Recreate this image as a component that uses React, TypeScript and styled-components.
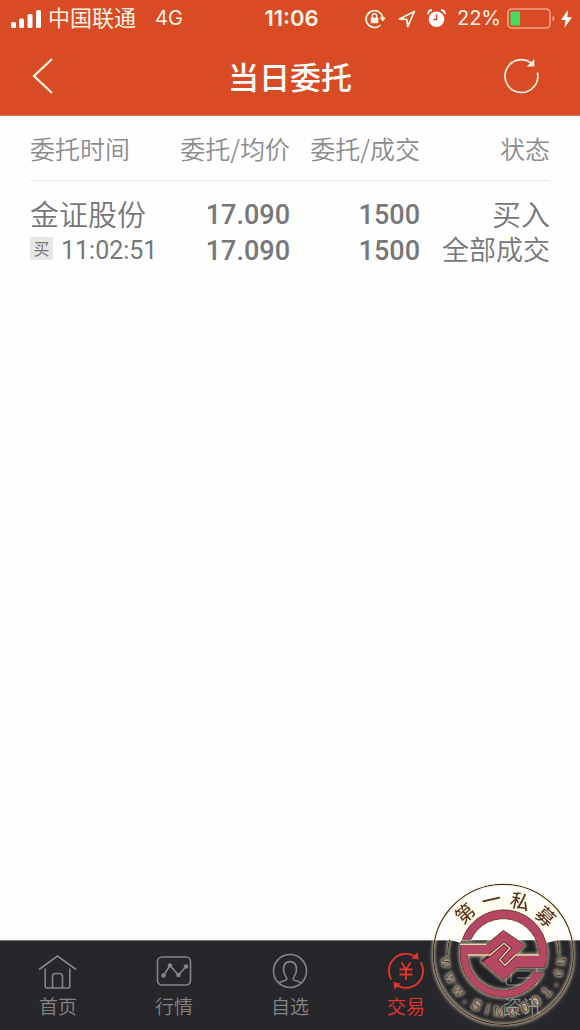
import React from "react";
import styled, { createGlobalStyle } from "styled-components";

const GlobalStyle = createGlobalStyle`
  * { box-sizing: border-box; }
  body {
    margin: 0;
    background: #fefefe;
    font-family: "Noto Sans CJK SC", sans-serif;
  }
`;

const Page = styled.div`
  position: relative;
  display: flex;
  flex-direction: column;
  min-height: 100vh;
`;

const TopArea = styled.header`
  background: #d84b24;
  color: #fff;
  border-bottom: 1px solid #e06a48;
`;

const StatusBar = styled.div`
  display: grid;
  grid-template-columns: 1fr auto 1fr;
  align-items: center;
  height: 37px;
  padding: 0 8px 0 11px;
  font-family: Inter, "Noto Sans CJK SC", sans-serif;
  font-size: 20px;
  line-height: 37px;
  color: #fff3e6;
`;

const StatusGroup = styled.div<{ $end?: boolean }>`
  display: flex;
  align-items: center;
  justify-content: ${(p) => (p.$end ? "flex-end" : "flex-start")};
  gap: ${(p) => (p.$end ? "6px" : "7px")};
  white-space: nowrap;
`;

const Indicators = styled.div`
  display: flex;
  align-items: center;
  gap: 11px;
`;

const Carrier = styled.span`
  font-size: 22px;
`;

const Network = styled.span`
  margin-left: 12px;
`;

const Clock = styled.span`
  font-size: 22px;
  font-weight: 600;
`;

const Icon = styled.svg`
  display: block;
  flex: none;
`;

const TitleBar = styled.div`
  display: grid;
  grid-template-columns: 58px 1fr 58px;
  align-items: center;
  height: 78px;
  padding: 0 30px 0 14px;
`;

const Title = styled.h1`
  margin: 0 0 0 16px;
  text-align: center;
  font-size: 31px;
  font-weight: 500;
  line-height: 44px;
`;

const IconButton = styled.button`
  display: flex;
  justify-content: center;
  align-items: center;
  height: 58px;
  padding: 0;
  border: 0;
  background: none;
  color: #fff3e6;
  cursor: pointer;
`;

const Content = styled.main`
  flex: 1;
  padding: 0 30px;
`;

const Orders = styled.table`
  width: 100%;
  table-layout: fixed;
  border-collapse: collapse;
  color: #777;
`;

const HeadCell = styled.th<{ $left?: boolean }>`
  height: 64px;
  padding: 0;
  border-bottom: 1px solid #ececec;
  font-size: 25px;
  font-weight: 350;
  line-height: 36px;
  color: #8c8c8c;
  white-space: nowrap;
  text-align: ${(p) => (p.$left ? "left" : "right")};
`;

const Cell = styled.td<{ $left?: boolean }>`
  padding: 14px 0 0;
  white-space: nowrap;
  text-align: ${(p) => (p.$left ? "left" : "right")};
`;

const Line = styled.div<{ $size: number }>`
  height: 36px;
  font-size: ${(p) => p.$size}px;
  font-weight: 350;
  line-height: 36px;
`;

const Figure = styled.div`
  height: 36px;
  font-family: Roboto, sans-serif;
  font-size: 27px;
  font-weight: 500;
  line-height: 40px;
`;

const TimeLine = styled.div`
  display: flex;
  align-items: center;
  gap: 8px;
  height: 36px;
`;

const Tag = styled.span`
  width: 23px;
  height: 23px;
  background: #e6e6e6;
  font-size: 16px;
  line-height: 23px;
  text-align: center;
`;

const Time = styled.time`
  font-family: Roboto, sans-serif;
  font-size: 25px;
  line-height: 36px;
  padding-top: 4px;
`;

const TabBar = styled.nav`
  display: grid;
  grid-template-columns: repeat(5, 1fr);
  height: 90px;
  border-top: 1px solid #77777a;
  background: #27262b;
`;

const Tab = styled.a<{ $active?: boolean }>`
  display: flex;
  flex-direction: column;
  align-items: center;
  padding-top: 10px;
  color: ${(p) => (p.$active ? "#e6332f" : "#858588")};
  font-size: 19px;
  font-weight: 350;
  line-height: 30px;
  text-decoration: none;
`;

const Stamp = styled.svg`
  position: absolute;
  right: 0;
  bottom: 0;
  width: 155px;
  height: 155px;
  pointer-events: none;
`;

const SignalIcon = () => (
  <Icon width="30" height="18" viewBox="0 0 30 18" fill="#fff" aria-hidden="true">
    <rect x="0" y="12" width="5" height="6" rx="1.5" />
    <rect x="8" y="8.500" width="5" height="9.500" rx="1.5" />
    <rect x="16.500" y="4" width="5" height="14" rx="1.5" />
    <rect x="25" y="0" width="5" height="18" rx="1.5" />
  </Icon>
);

const LockIcon = () => (
  <Icon width="22" height="20" viewBox="0 0 22 20" fill="none" stroke="currentColor" aria-hidden="true">
    <path d="M17.900 9.500A8.400 8.400 0 1 0 15.500 16" strokeWidth="1.700" />
    <path d="M14.500 8.500h6.500l-3.300 4z" fill="currentColor" stroke="none" />
    <rect x="5.700" y="8.600" width="7.600" height="5.600" rx=".7" fill="currentColor" stroke="none" />
    <path d="M7.300 9V7a2.200 2.200 0 0 1 4.400 0v2" strokeWidth="1.400" />
  </Icon>
);

const LocationIcon = () => (
  <Icon width="18" height="18" viewBox="0 0 18 18" fill="none" stroke="currentColor" strokeWidth="1.800" strokeLinejoin="round" aria-hidden="true">
    <path d="M1.500 9L16.300 1.500 9.800 16.500 8.800 9.400z" />
  </Icon>
);

const AlarmIcon = () => (
  <Icon width="19" height="19" viewBox="0 0 19 19" fill="none" aria-hidden="true">
    <circle cx="9.500" cy="10.200" r="7.800" fill="#fff" />
    <path d="M1 5.200Q1.200 1.600 5 1M14 1q3.800.6 4 4.200" stroke="#fff" strokeWidth="1.800" />
    <path d="M9.600 5.500v5H6.300" stroke="#d84b24" strokeWidth="1.500" />
  </Icon>
);

const BatteryIcon = () => (
  <Icon width="48" height="22" viewBox="0 0 48 22" fill="none" aria-hidden="true">
    <rect x="1" y="1" width="42" height="19" rx="4" stroke="#f0a183" strokeWidth="1.600" />
    <rect x="3.500" y="3.500" width="9.500" height="14" rx="1.500" fill="#45dc5f" />
    <path d="M45.500 7.500q2 .8 2 3t-2 3z" fill="#f0a183" />
  </Icon>
);

const BoltIcon = () => (
  <Icon width="11" height="18" viewBox="0 0 11 18" fill="#fff" aria-hidden="true">
    <path d="M7 0L0 10h4.600L3.400 18 11 7.300H6.300z" />
  </Icon>
);

const BackIcon = () => (
  <Icon width="24" height="38" viewBox="0 0 24 38" fill="none" stroke="currentColor" strokeWidth="2.200" aria-hidden="true">
    <path d="M21 2L3 19l18 17" />
  </Icon>
);

const RefreshIcon = () => (
  <Icon width="36" height="36" viewBox="0 0 36 36" fill="none" stroke="currentColor" strokeWidth="1.700" aria-hidden="true">
    <path d="M34.400 14.500A16.400 16.400 0 1 1 28 4.800" />
    <path d="M31.300 1v7.500h-7.500z" fill="currentColor" stroke="none" />
  </Icon>
);

const tabIconProps = {
  width: 40,
  height: 40,
  viewBox: "0 0 40 40",
  fill: "none",
  stroke: "currentColor",
  strokeWidth: 1.6,
  "aria-hidden": true,
} as const;

const HomeIcon = () => (
  <Icon {...tabIconProps}>
    <path d="M1 18.500L19.500 5 38 18.500" />
    <path d="M7.200 17.500V35a2 2 0 0 0 2 2h20.600a2 2 0 0 0 2-2V17.500" />
    <path d="M14.500 37V25.500a3 3 0 0 1 3-3h4a3 3 0 0 1 3 3V37" />
  </Icon>
);

const QuotesIcon = () => (
  <Icon {...tabIconProps}>
    <rect x="3.500" y="6" width="33" height="28" rx="4.500" />
    <path d="M9.500 24.500l6.500-10 8.500 9.500 7.500-8.500" />
    <g fill="currentColor" stroke="none">
      <circle cx="9.500" cy="24.500" r="2.300" />
      <circle cx="16" cy="14.500" r="2.300" />
      <circle cx="24.500" cy="24" r="2.300" />
      <circle cx="32" cy="15.500" r="2.300" />
    </g>
  </Icon>
);

const PersonIcon = () => (
  <Icon {...tabIconProps}>
    <circle cx="20" cy="20" r="16.500" />
    <path d="M9.200 31.800c1.600-2.300 6.800-1.500 7.600-3.600.6-1.800-3.300-4-3.300-9.700 0-5 2.500-7.900 6.500-7.900s6.500 2.900 6.500 7.900c0 5.700-3.900 7.900-3.300 9.700.8 2.100 6 1.300 7.600 3.600" />
  </Icon>
);

const TradeIcon = () => (
  <Icon {...tabIconProps} strokeWidth={1.9}>
    <path d="M5.300 28.500A17 17 0 0 1 28.500 5.200M34.700 11.300A17 17 0 0 1 11.500 34.600" />
    <path d="M25.500 7.500L31.500 1l1.200 7.500zM14.500 32.500L8.500 38.500 7.300 31z" fill="currentColor" stroke="none" />
    <path d="M15.500 11.500l4.500 7 4.500-7M20 18.500v10.500M13.500 18.500h13M13.500 23.500h13" />
  </Icon>
);

const NewsIcon = () => (
  <Icon {...tabIconProps}>
    <path d="M9 10V6.500h26V31a3 3 0 0 1-3 3H7a3 3 0 0 1-3-3V14h5v17" />
    <path d="M15 13h14M15 20h14M15 27h14" />
  </Icon>
);

const siteLetters: [string, number][] = [
  ["w", 82], ["w", 66], ["w", 51], [".", 39], ["S", 28], ["i", 16], ["M", 4],
  ["u", -9], ["0", -22], ["0", -35], ["1", -49], [".", -60], ["c", -71], ["n", -83],
];

const StampLogo = () => (
  <Stamp viewBox="0 0 465 465" role="img" aria-label="第一私募">
    <defs>
      <filter id="glow" x="-10%" y="-10%" width="120%" height="120%">
        <feMorphology in="SourceAlpha" operator="dilate" radius="2" result="wide" />
        <feGaussianBlur in="wide" stdDeviation="4" result="soft" />
        <feFlood floodColor="#fff6d0" floodOpacity=".6" />
        <feComposite in2="soft" operator="in" result="halo" />
        <feMerge>
          <feMergeNode in="halo" />
          <feMergeNode in="SourceGraphic" />
        </feMerge>
      </filter>
    </defs>
    <path d="M107 196H363A134 134 0 0 1 235 373 134 134 0 0 1 107 196Z" fill="#101714" fillOpacity=".3" />
    <g filter="url(#glow)">
      <circle cx="235" cy="238" r="210" fill="none" stroke="#4a2a1c" strokeWidth="4" />
      <path d="M68 240A167 167 0 1 1 402 240" fill="none" stroke="#4a2a1c" strokeWidth="4" />
    </g>
    <circle cx="235" cy="238" r="152" fill="none" stroke="#fffef4" strokeWidth="37" strokeDasharray="398 557" transform="rotate(195 235 238)" />
    <g filter="url(#glow)" fill="#5c3024">
      <g fontFamily="Noto Sans CJK SC" fontSize="58" fontWeight="500" textAnchor="middle">
        <text transform="translate(121 116) rotate(-42)" y="21">第</text>
        <text transform="translate(199 75) rotate(-13)" y="21">一</text>
        <text transform="translate(285 80) rotate(13)" y="21">私</text>
        <text transform="translate(361 125) rotate(43)" y="21">募</text>
      </g>
      <g fontFamily="Liberation Sans" fontSize="42" textAnchor="middle">
        {siteLetters.map(([letter, angle]) => (
          <text key={angle} transform={`rotate(${angle} 235 238)`} x="235" y="424">
            {letter}
          </text>
        ))}
      </g>
    </g>
    <g filter="url(#glow)" transform="translate(90 90)">
      <g fill="#b64764" stroke="#6d3036" strokeWidth="3" strokeLinejoin="round">
        <path d="M22 103A131 131 0 0 1 270 188H186L145 226 80 169 105 150H38A107 107 0 0 0 237 203H264A131 131 0 0 1 18 118H95L145 76 209 120 182 150H252A107 107 0 0 0 48 103Z" />
      </g>
      <path d="M80 169L105 150 147 115 165 129 134 164 150 181 182 150" fill="none" stroke="#5e2a30" strokeWidth="9" />
      <path d="M15 118H95M38 150H105L147 115 165 129 134 164 150 181 182 150H252" fill="none" stroke="#ecdcae" strokeWidth="4" />
    </g>
  </Stamp>
);

const tabs = [
  { label: "首页", icon: <HomeIcon /> },
  { label: "行情", icon: <QuotesIcon /> },
  { label: "自选", icon: <PersonIcon /> },
  { label: "交易", icon: <TradeIcon />, active: true },
  { label: "资讯", icon: <NewsIcon /> },
];

const orders = [
  {
    name: "金证股份",
    tag: "买",
    time: "11:02:51",
    price: "17.090",
    average: "17.090",
    quantity: "1500",
    filled: "1500",
    side: "买入",
    status: "全部成交",
  },
];

export default function App() {
  return (
    <Page>
      <GlobalStyle />
      <TopArea>
        <StatusBar>
          <StatusGroup>
            <SignalIcon />
            <Carrier>中国联通</Carrier>
            <Network>4G</Network>
          </StatusGroup>
          <Clock>11:06</Clock>
          <StatusGroup $end>
            <Indicators>
              <LockIcon />
              <LocationIcon />
              <AlarmIcon />
              <span>22%</span>
            </Indicators>
            <BatteryIcon />
            <BoltIcon />
          </StatusGroup>
        </StatusBar>
        <TitleBar>
          <IconButton type="button" aria-label="返回">
            <BackIcon />
          </IconButton>
          <Title>当日委托</Title>
          <IconButton type="button" aria-label="刷新">
            <RefreshIcon />
          </IconButton>
        </TitleBar>
      </TopArea>
      <Content>
        <Orders>
          <thead>
            <tr>
              <HeadCell $left>委托时间</HeadCell>
              <HeadCell>委托/均价</HeadCell>
              <HeadCell>委托/成交</HeadCell>
              <HeadCell>状态</HeadCell>
            </tr>
          </thead>
          <tbody>
            {orders.map((o) => (
              <tr key={o.time}>
                <Cell $left>
                  <Line $size={29}>{o.name}</Line>
                  <TimeLine>
                    <Tag>{o.tag}</Tag>
                    <Time>{o.time}</Time>
                  </TimeLine>
                </Cell>
                <Cell>
                  <Figure>{o.price}</Figure>
                  <Figure>{o.average}</Figure>
                </Cell>
                <Cell>
                  <Figure>{o.quantity}</Figure>
                  <Figure>{o.filled}</Figure>
                </Cell>
                <Cell>
                  <Line $size={29}>{o.side}</Line>
                  <Line $size={27}>{o.status}</Line>
                </Cell>
              </tr>
            ))}
          </tbody>
        </Orders>
      </Content>
      <TabBar>
        {tabs.map((t) => (
          <Tab key={t.label} href="#" $active={t.active} aria-current={t.active ? "page" : undefined}>
            {t.icon}
            {t.label}
          </Tab>
        ))}
      </TabBar>
      <StampLogo />
    </Page>
  );
}
